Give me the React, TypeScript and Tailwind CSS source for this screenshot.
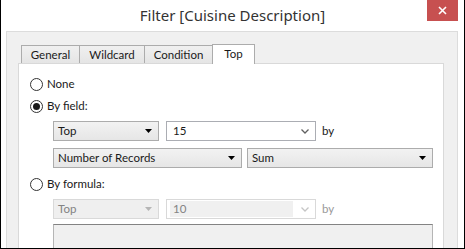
import React from "react";

const FONT = { fontFamily: 'Lato, "Noto Sans", sans-serif' };
const TITLE_FONT = { fontFamily: '"Noto Sans", "Open Sans", sans-serif' };

function Radio({ checked, label }: { checked?: boolean; label: string }) {
  return (
    <div className="flex h-4 items-center">
      <span className="flex h-[13px] w-[13px] items-center justify-center rounded-full border border-[#333] bg-white">
        {checked && <span className="h-[7px] w-[7px] rounded-full bg-[#1a1a1a]" />}
      </span>
      <span className="ml-[4px] text-[11.5px] text-[#1a1a1a]">{label}</span>
    </div>
  );
}

function Triangle({ disabled }: { disabled?: boolean }) {
  return (
    <svg width="7" height="4" viewBox="0 0 7 4" className="shrink-0">
      <path d="M0 0H7L3.5 4Z" fill={disabled ? "#b5b5b5" : "#000"} />
    </svg>
  );
}

function Chevron({ disabled }: { disabled?: boolean }) {
  return (
    <svg width="8" height="5" viewBox="0 0 8 5" className="shrink-0">
      <path
        d="M0.5 0.5L4 4L7.5 0.5"
        fill="none"
        stroke={disabled ? "#c5c5c5" : "#606060"}
        strokeWidth="1.3"
      />
    </svg>
  );
}

function Select({ value, width, disabled }: { value: string; width: string; disabled?: boolean }) {
  return (
    <div
      className={`flex h-5 items-center justify-between border pl-[4px] pr-[6px] text-[11.5px] ${width} ${
        disabled
          ? "border-[#d9d9d9] bg-[#efefef] text-[#838383]"
          : "border-[#acacac] bg-gradient-to-b from-[#f2f2f2] to-[#e6e6e6] text-[#1a1a1a]"
      }`}
    >
      <span>{value}</span>
      <Triangle disabled={disabled} />
    </div>
  );
}

function Combo({ value, width, disabled }: { value: string; width: string; disabled?: boolean }) {
  return (
    <div
      className={`flex h-5 items-center border bg-white pr-[6px] text-[11.5px] ${width} ${
        disabled ? "border-[#d9d9d9] text-[#838383]" : "border-[#abadb3] text-[#1a1a1a]"
      }`}
    >
      <div
        className={`ml-[3px] flex h-[16px] flex-1 items-center pl-[3px] ${
          disabled ? "bg-[#f0f0f0]" : ""
        }`}
      >
        {value}
      </div>
      <span className="ml-[8px]">
        <Chevron disabled={disabled} />
      </span>
    </div>
  );
}

const TABS = [
  { label: "General", w: "w-[59px]" },
  { label: "Wildcard", w: "w-[66px]" },
  { label: "Condition", w: "w-[69px]" },
];

export default function App() {
  return (
    <div
      style={FONT}
      className="flex h-[249px] w-[465px] flex-col overflow-hidden border-x border-b border-black bg-white"
    >
      <div className="relative flex h-[31px] shrink-0 items-center justify-center">
        <span style={TITLE_FONT} className="-mt-[1px] text-[15px] text-[#333]">
          Filter [Cuisine Description]
        </span>
        <div className="absolute right-[6px] top-0 flex h-[21px] w-[31px] items-center justify-center bg-[#c75050]">
          <svg width="9" height="9" viewBox="0 0 9 9">
            <path d="M1 1L8 8M8 1L1 8" stroke="#fff" strokeWidth="1.6" />
          </svg>
        </div>
      </div>
      <div className="ml-[5px] flex w-[452px] flex-1 flex-col border-x border-t border-[#dcdcdc] bg-[#f0f0f0] pl-[11px] pt-[11px]">
        <div className="ml-[3px] flex h-[20px] items-end">
          {TABS.map((t, i) => (
            <div
              key={t.label}
              className={`flex h-[18px] items-center justify-center border border-b-0 border-[#acacac] bg-gradient-to-b from-[#f0f0f0] to-[#e5e5e5] text-[11.5px] text-[#1a1a1a] ${t.w} ${
                i > 0 ? "-ml-px" : ""
              }`}
            >
              {t.label}
            </div>
          ))}
          <div className="relative z-10 -ml-px flex h-[20px] w-[43px] translate-y-px items-center justify-center border border-b-0 border-[#acacac] bg-white pb-[2px] text-[11.5px] text-[#1a1a1a]">
            Top
          </div>
        </div>
        <div className="flex w-[426px] flex-1 flex-col border border-b-0 border-[#d9d9d9] bg-white pl-[11px] pt-[12px]">
          <Radio label="None" />
          <div className="mt-[6px]">
            <Radio checked label="By field:" />
          </div>
          <div className="ml-[23px] mt-[7px] flex flex-col gap-[7px]">
            <div className="flex items-center">
              <Select value="Top" width="w-[106px]" />
              <div className="ml-[7px]">
                <Combo value="15" width="w-[150px]" />
              </div>
              <span className="ml-[6px] text-[11.5px] text-[#1a1a1a]">by</span>
            </div>
            <div className="flex items-center">
              <Select value="Number of Records" width="w-[189px]" />
              <div className="ml-[5px]">
                <Select value="Sum" width="w-[186px]" />
              </div>
            </div>
          </div>
          <div className="mt-[8px]">
            <Radio label="By formula:" />
          </div>
          <div className="ml-[23px] mt-[7px] flex items-center">
            <Select value="Top" width="w-[106px]" disabled />
            <div className="ml-[7px]">
              <Combo value="10" width="w-[150px]" disabled />
            </div>
            <span className="ml-[6px] text-[11.5px] text-[#9a9a9a]">by</span>
          </div>
          <div className="ml-[23px] mt-[5px] h-[40px] w-[380px] border border-[#b5b5b5] border-t-[#838383] bg-[#f0f0f0]" />
        </div>
      </div>
    </div>
  );
}
